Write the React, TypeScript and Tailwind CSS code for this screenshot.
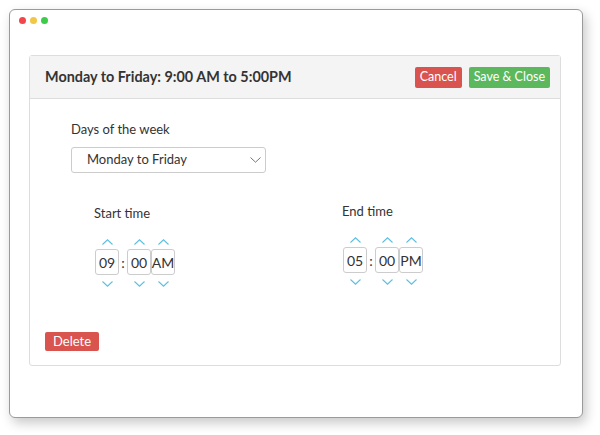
import React from "react";

function Up() {
  return (
    <svg width="11" height="6" viewBox="0 0 11 6" fill="none">
      <path d="M0.5 5.5 L5.5 0.8 L10.5 5.5" stroke="#5bc0de" strokeWidth="1.1" />
    </svg>
  );
}
function Down() {
  return (
    <svg width="11" height="6" viewBox="0 0 11 6" fill="none">
      <path d="M0.5 0.5 L5.5 5.2 L10.5 0.5" stroke="#5bc0de" strokeWidth="1.1" />
    </svg>
  );
}

function Unit({ v }: { v: string }) {
  return (
    <div className="flex flex-col items-center">
      <div className="h-[10px] flex items-start justify-center"><Up /></div>
      <div className="w-[24px] h-[26px] border border-[#cccccc] rounded-[3px] flex items-center justify-center text-[14px] text-[#333] bg-white">
        {v}
      </div>
      <div className="h-[12px] flex items-end justify-center"><Down /></div>
    </div>
  );
}

function TimePicker({ h, m, p }: { h: string; m: string; p: string }) {
  return (
    <div className="flex items-center">
      <Unit v={h} />
      <div className="w-[8px] text-center text-[14px] text-[#333] leading-none">:</div>
      <Unit v={m} />
      <Unit v={p} />
    </div>
  );
}

export default function App() {
  return (
    <div className="w-[600px] h-[435px] bg-white pt-[9px] pl-[9px]" style={{ fontFamily: "Lato, 'Open Sans', sans-serif" }}>
      <div className="w-[574px] h-[409px] border border-[#9a9a9a] rounded-[6px] bg-white shadow-[3px_5px_12px_rgba(0,0,0,0.22)]">
        <div className="flex gap-[4px] pl-[9px] pt-[7px]">
          <span className="w-[7px] h-[7px] rounded-full bg-[#f2464a]" />
          <span className="w-[7px] h-[7px] rounded-full bg-[#f2c744]" />
          <span className="w-[7px] h-[7px] rounded-full bg-[#3ecb4a]" />
        </div>
        <div className="ml-[19px] mt-[31px] w-[532px] h-[311px] border border-[#dddddd] rounded-[3px] flex flex-col">
          <div className="h-[43px] bg-[#f4f4f4] border-b border-[#dddddd] flex items-center justify-between pl-[15px] pr-[10px]">
            <div className="text-[14.4px] font-bold text-[#333]">Monday to Friday: 9:00 AM to 5:00PM</div>
            <div className="flex gap-[7px]">
              <button className="h-[21px] px-[5px] bg-[#d9534f] text-white text-[12.5px] rounded-[2px] leading-none">Cancel</button>
              <button className="h-[21px] px-[5px] bg-[#5cb85c] text-white text-[12.5px] rounded-[2px] leading-none">Save &amp; Close</button>
            </div>
          </div>
          <div className="flex-1 flex flex-col pl-[41px]">
            <div className="mt-[22px] text-[13px] text-[#333] leading-[16px]">Days of the week</div>
            <div className="mt-[10px] w-[195px] h-[26px] border border-[#cccccc] rounded-[3px] flex items-center justify-between pl-[15px] pr-[4px]">
              <span className="text-[13px] text-[#333]">Monday to Friday</span>
              <svg width="11" height="6" viewBox="0 0 11 6" fill="none">
                <path d="M0.5 0.5 L5.5 5.2 L10.5 0.5" stroke="#666" strokeWidth="0.9" />
              </svg>
            </div>
            <div className="flex mt-[30px]">
              <div className="ml-[23px] w-[248px] flex flex-col">
                <div className="text-[13px] text-[#333] leading-[16px] pt-[2px]">Start time</div>
                <div className="mt-[18px] ml-[1px]"><TimePicker h="09" m="00" p="AM" /></div>
              </div>
              <div className="flex flex-col">
                <div className="text-[13px] text-[#333] leading-[16px]">End time</div>
                <div className="mt-[18px] ml-[1px]"><TimePicker h="05" m="00" p="PM" /></div>
              </div>
            </div>
          </div>
          <div className="pl-[15px] pb-[13px]">
            <button className="h-[19px] w-[54px] bg-[#d9534f] text-white text-[13px] rounded-[2px] leading-none">Delete</button>
          </div>
        </div>
      </div>
    </div>
  );
}
